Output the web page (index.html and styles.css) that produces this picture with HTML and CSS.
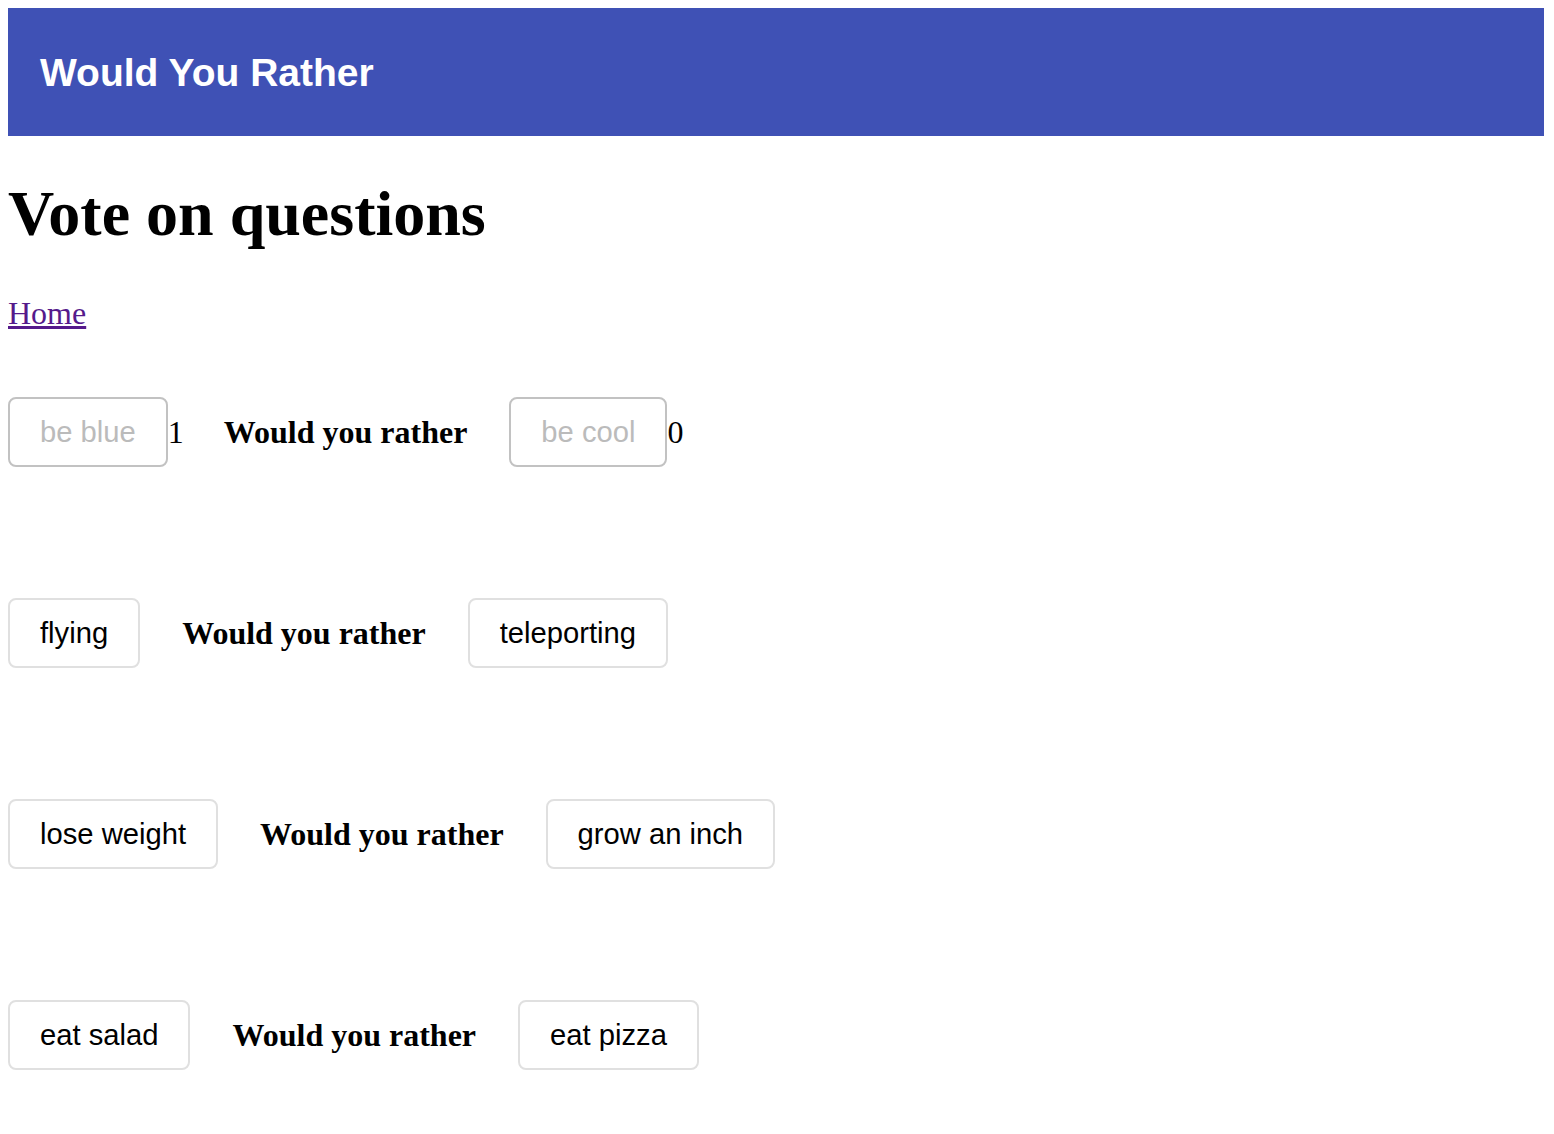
FILE: index.html
```html
<!DOCTYPE html>
<html>
<head>
<meta charset="utf-8">
<title>Would You Rather</title>
<link rel="stylesheet" href="styles.css">
</head>
<body>
<header class="app-bar">
  <div class="app-title">Would You Rather</div>
</header>
<h1 class="page-title">Vote on questions</h1>
<div class="nav"><a href="#" class="home-link">Home</a></div>
<div class="questions">
  <div class="question">
    <button class="choice" disabled>be blue</button><span class="count">1</span>
    <span class="prompt">Would you rather</span>
    <button class="choice" disabled>be cool</button><span class="count">0</span>
  </div>
  <div class="question">
    <button class="choice">flying</button>
    <span class="prompt">Would you rather</span>
    <button class="choice">teleporting</button>
  </div>
  <div class="question">
    <button class="choice">lose weight</button>
    <span class="prompt">Would you rather</span>
    <button class="choice">grow an inch</button>
  </div>
  <div class="question">
    <button class="choice">eat salad</button>
    <span class="prompt">Would you rather</span>
    <button class="choice">eat pizza</button>
  </div>
</div>
</body>
</html>
```
FILE: styles.css
```css
body {
  margin: 8px;
  font-family: "Liberation Serif", "Times New Roman", serif;
  color: #000;
  background: #fff;
}

.app-bar {
  background: #3f51b5;
  height: 128px;
  display: flex;
  align-items: center;
  padding: 0 32px;
  margin-right: 2px;
}

.app-title {
  font-family: "Liberation Sans", Arial, sans-serif;
  font-weight: bold;
  font-size: 39px;
  color: #fff;
  position: relative;
  top: 1px;
}

.page-title {
  font-size: 64px;
  font-weight: bold;
  margin: 42px 0 45px;
  line-height: 72px;
}

.nav {
  font-size: 32px;
  line-height: 37px;
}

.home-link {
  color: #551a8b;
  text-decoration: underline;
}

.questions {
  display: flex;
  flex-direction: column;
  gap: 131px;
  padding-top: 65px;
  padding-bottom: 63px;
}

.question {
  display: flex;
  align-items: center;
  height: 70px;
}

.choice {
  font-family: "Liberation Sans", Arial, sans-serif;
  font-size: 29.2px;
  line-height: 34px;
  padding: 16px 30px;
  border: 2px solid #e0e0e0;
  border-radius: 8px;
  background: #fff;
  color: #000;
  margin: 0;
}

.choice:disabled {
  border-color: #c2c2c2;
  color: #bbbbbb;
}

.count {
  font-size: 32px;
}

.count + .prompt {
  margin-left: 40px;
}

.prompt {
  font-size: 32px;
  font-weight: bold;
  margin: 0 42px;
}
```
